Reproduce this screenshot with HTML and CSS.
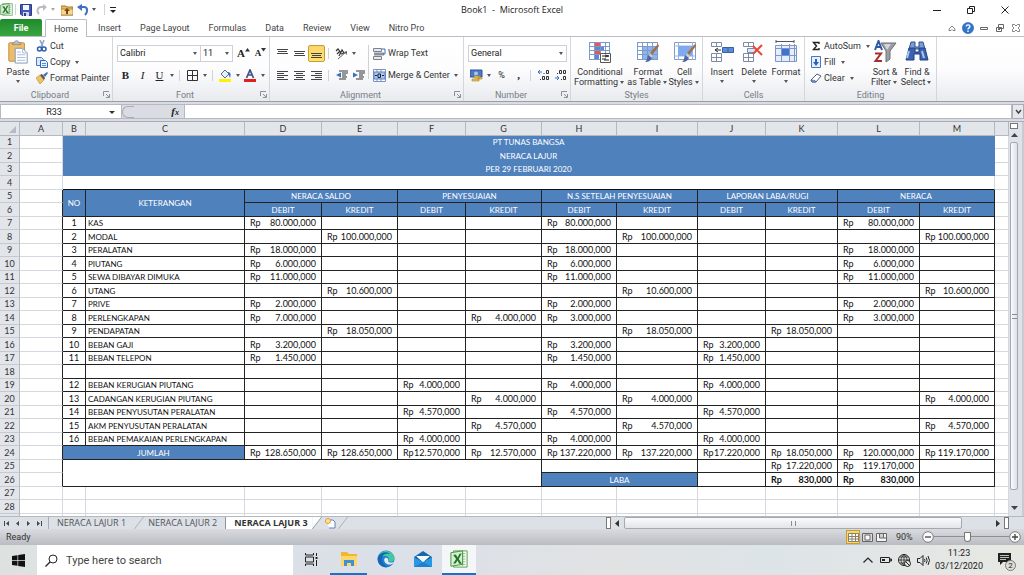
FILE: index.html
```html
<!DOCTYPE html>
<html lang="id">
<head>
<meta charset="utf-8">
<title>Book1 - Microsoft Excel</title>
<link rel="stylesheet" href="styles.css">
</head>
<body>
<svg class="defs" aria-hidden="true">
  <symbol id="excel" viewBox="0 0 20 20"><path d="M4 1h15v18H4z" fill="#f4faf2" stroke="#4f9a4b"/><path d="M11 4h6M11 7h6M11 10h6M11 13h6M11 16h6M14 3v15" stroke="#86bd7e"/><path d="M1 3l13-2v15L1 18z" fill="#d9efd2" stroke="#3c8c3b"/><path d="M3.500 5.500l3-.4 2 3.200 2-4 2.500-.3-3.200 6 3.500 5.500-3-.2-2-3.600-2 3.400-2.800-.2 3.300-5z" fill="#23772b"/></symbol>
  <symbol id="launch" viewBox="0 0 7 7"><path d="M.5 5V.5H6M3 3l3 3M6.500 3v3.500H3" fill="none" stroke="#8c9199"/></symbol>
</svg>

<header class="titlebar">
  <div class="quick">
    <svg class="i13"><use href="#excel"/></svg><span class="bar"></span>
    <button aria-label="Save"><svg class="i12" viewBox="0 0 12 12"><path d="M.5.5h11v11H2l-1.500-1.500z" fill="#4358b5" stroke="#2c3b8c"/><path d="M3 1h6v5H3z" fill="#f4f6ff"/><path d="M3 8h6v4H3z" fill="#cfd6ee"/><path d="M4 9h2v3H4z" fill="#2c3b8c"/></svg></button>
    <button class="split-button" aria-label="Redo"><svg class="i12" viewBox="0 0 12 12"><path d="M3 10C0 7 2 3 5 3h3" fill="none" stroke="#b9bcc2" stroke-width="2"/><path d="M7 0l4 3-4 4z" fill="#b9bcc2"/></svg><span class="dd pale"></span></button>
    <button aria-label="Open"><svg class="i12" viewBox="0 0 12 12"><path d="M0 2h5l1 1h6v8H0z" fill="#e8ba5a" stroke="#a57a2a"/><path d="M0 5h12v6H0z" fill="#f6d88e" stroke="#a57a2a" stroke-width=".7"/><path d="M6 4l3 3H7v3H5V7H3z" fill="#79421b"/></svg></button>
    <button class="split-button" aria-label="Undo"><svg class="i12" viewBox="0 0 12 12"><path d="M4 3h3c4 0 4 5 1 8" fill="none" stroke="#3d6fc6" stroke-width="2"/><path d="M5 0v7L0 3z" fill="#3d6fc6"/></svg><span class="dd"></span></button>
    <span class="bar"></span>
    <button aria-label="Customize"><svg class="i8" viewBox="0 0 8 8"><path d="M1 1.500h6" stroke="#222"/><path d="M1 4h6L4 7z" fill="#222"/></svg></button>
  </div>
  <h1>Book1&nbsp; -&nbsp; Microsoft Excel</h1>
  <div class="window">
    <button aria-label="Minimize"><svg class="i8" viewBox="0 0 8 8"><path d="M0 4.500h8" stroke="#222"/></svg></button>
    <button aria-label="Restore"><svg class="i8" viewBox="0 0 8 8"><path d="M.5 2.500h5v5h-5zM2.500 2V.5h5v5H6" fill="none" stroke="#222"/></svg></button>
    <button aria-label="Close"><svg class="i8" viewBox="0 0 8 8"><path d="M.5.5l7 7M7.500.5l-7 7" stroke="#222"/></svg></button>
  </div>
</header>

<nav class="tabs">
  <button class="file">File</button>
  <button class="home">Home</button>
  <button>Insert</button><button>Page Layout</button><button>Formulas</button><button>Data</button><button>Review</button><button>View</button><button>Nitro Pro</button>
  <div class="help">
    <button aria-label="Collapse ribbon"><svg class="i8" viewBox="0 0 8 8"><path d="M1 5l3-3 3 3v1.500H5L4 5.500 3 6.500H1z" fill="#fff" stroke="#666" stroke-width=".8"/></svg></button>
    <button aria-label="Help"><svg class="i12" viewBox="0 0 12 12"><circle cx="6" cy="6" r="5.600" fill="#2f75cd" stroke="#255ba6" stroke-width=".6"/><path d="M4.200 4.500c0-2.200 3.700-2.200 3.700 0C7.900 6 6 5.800 6 7.400M6 8.500V10" fill="none" stroke="#fff" stroke-width="1.400"/></svg></button>
    <button aria-label="Minimize workbook"><svg class="i8" viewBox="0 0 8 8"><path d="M.5 3.500h7v2h-7z" fill="#fff" stroke="#666"/></svg></button>
    <button aria-label="Restore workbook"><svg class="i8" viewBox="0 0 8 8"><path d="M2.500.5h5v4h-5zM.5 3.500h5v4h-5z" fill="#fff" stroke="#666"/><path d="M2 5.500h2" stroke="#666"/></svg></button>
    <button aria-label="Close workbook"><svg class="i8" viewBox="0 0 8 8"><path d="M.5.5h2L4 2 5.500.5h2v2L6 4l1.500 1.500v2h-2L4 6 2.500 7.500h-2v-2L2 4 .5 2.500z" fill="#fff" stroke="#666" stroke-width=".8"/></svg></button>
  </div>
</nav>

<div class="ribbon">
  <section class="group clipboard">
    <div class="tools">
      <button class="big paste"><svg class="i24" viewBox="0 0 24 26"><rect x="2" y="3" width="17" height="20" rx="1" fill="#edbd69" stroke="#c38d3a"/><path d="M6 5V3h2c0-3 5-3 5 0h2v2z" fill="#b9bcc3" stroke="#777" stroke-width=".6"/><path d="M9 9h8l5 5v11H9z" fill="#fff" stroke="#7f95bb"/><path d="M17 9v5h5M11 13h4M11 16h9M11 19h9M11 22h9" fill="none" stroke="#a6bbdc"/></svg><span>Paste</span><span class="dd"></span></button>
      <div class="list">
        <button><svg class="i12" viewBox="0 0 12 12"><path d="M4 0l3 7M8 0L5 7" stroke="#8aa3c8" stroke-width="1.500"/><circle cx="3.500" cy="9" r="2" fill="none" stroke="#2c5fae" stroke-width="1.500"/><circle cx="8" cy="9" r="2" fill="none" stroke="#2c5fae" stroke-width="1.500"/></svg>Cut</button>
        <button><svg class="i12" viewBox="0 0 12 12"><path d="M.5 1.500h5l2 2v6h-7z" fill="#dbe8fb" stroke="#4a78c0"/><path d="M4.500 4.500h5l2 2v5h-7z" fill="#e8f1ff" stroke="#3366b4"/><path d="M6 7.500h4M6 9.500h4" stroke="#5f8bd0"/></svg>Copy<span class="dd"></span></button>
        <button><svg class="i12" viewBox="0 0 12 12"><path d="M0 6l4-3 4 5-4 4z" fill="#eec45f" stroke="#b48a2c" stroke-width=".6"/><path d="M4 3l2-1 3 4-1 2z" fill="#555"/><path d="M7 3l4-3 1 1-3 4z" fill="#4b6fb0"/></svg>Format Painter</button>
      </div>
    </div>
    <footer><h2>Clipboard</h2><button aria-label="Clipboard options"><svg class="i7"><use href="#launch"/></svg></button></footer>
  </section>

  <section class="group font">
    <div class="rows">
      <div class="row">
        <label class="combo face"><select aria-label="Font"><option>Calibri</option></select></label><label class="combo size"><select aria-label="Font size"><option>11</option></select></label>
        <button class="t serif grow" aria-label="Grow font">A<svg class="i5" viewBox="0 0 5 5"><path d="M0 3.500L2.500 0 5 3.500z" fill="#333"/></svg></button><button class="t serif shrink" aria-label="Shrink font">A<svg class="i5" viewBox="0 0 5 5"><path d="M0 0h5L2.500 3.500z" fill="#333"/></svg></button>
      </div>
      <div class="row">
        <button class="t serif"><b>B</b></button><button class="t serif"><i>I</i></button><button class="t serif"><u>U</u></button><span class="dd"></span><span class="bar"></span>
        <button class="t" aria-label="Borders"><svg class="i11" viewBox="0 0 11 11"><path d="M.5.5h10v10H.5zM5.500 0v11M0 5.500h11" fill="none" stroke="#333"/></svg></button><span class="dd"></span><span class="bar"></span>
        <button class="t" aria-label="Fill color"><svg class="i13" viewBox="0 0 13 13"><path d="M2 5l4-4 4 4-4 4z" fill="#e9eef8" stroke="#55698f"/><path d="M9 3c3 0 3 3 2 6-1-3-2-3-2-6z" fill="#3b6fc0"/><path d="M0 10h12v3H0z" fill="#fdf200"/></svg></button><span class="dd"></span>
        <button class="t" aria-label="Font color"><svg class="i13" viewBox="0 0 13 13"><path d="M2.500 9L6 1l3.500 8M4 6h4.500" fill="none" stroke="#3b5488" stroke-width="1.700"/><path d="M0 10h12v3H0z" fill="#e01f1f"/></svg></button><span class="dd"></span>
      </div>
    </div>
    <footer><h2>Font</h2><button aria-label="Font options"><svg class="i7"><use href="#launch"/></svg></button></footer>
  </section>

  <section class="group align">
    <div class="tools">
      <div class="rows">
        <div class="row">
          <button class="t" aria-label="Top align"><svg class="i11" viewBox="0 0 11 11"><path d="M0 1.500h11M1 3.500h9M0 5.500h11" stroke="#444"/></svg></button><button class="t" aria-label="Middle align"><svg class="i11" viewBox="0 0 11 11"><path d="M0 3.500h11M1 5.500h9M0 7.500h11" stroke="#444"/></svg></button><button class="t on" aria-label="Bottom align"><svg class="i11" viewBox="0 0 11 11"><path d="M0 5.500h11M1 7.500h9M0 9.500h11" stroke="#444"/></svg></button><span class="bar"></span>
          <button class="t" aria-label="Orientation"><svg class="i13" viewBox="0 0 13 13"><path d="M1 4l2-2 3 4M2 7l3-3M4 9l3-6 2 3-3 1" fill="none" stroke="#333" stroke-width="1.200"/><path d="M3 12l8-7" stroke="#666"/><path d="M12 4v4L9 5z" fill="#666"/></svg></button><span class="dd"></span>
        </div>
        <div class="row">
          <button class="t" aria-label="Align left"><svg class="i11" viewBox="0 0 11 11"><path d="M0 1.500h11M0 3.500h7M0 5.500h11M0 7.500h7M0 9.500h11" stroke="#444"/></svg></button><button class="t" aria-label="Center"><svg class="i11" viewBox="0 0 11 11"><path d="M0 1.500h11M2 3.500h7M0 5.500h11M2 7.500h7M0 9.500h11" stroke="#444"/></svg></button><button class="t" aria-label="Align right"><svg class="i11" viewBox="0 0 11 11"><path d="M0 1.500h11M4 3.500h7M0 5.500h11M4 7.500h7M0 9.500h11" stroke="#444"/></svg></button><span class="bar"></span>
          <button class="t" aria-label="Decrease indent"><svg class="i12" viewBox="0 0 12 11"><path d="M3 1.500h9M6 3.500h6M6 5.500h4M6 7.500h5M3 9.500h7" stroke="#333"/><path d="M5 3v5L0 5.500z" fill="#3b6fc0"/></svg></button><button class="t" aria-label="Increase indent"><svg class="i12" viewBox="0 0 12 11"><path d="M3 1.500h9M6 3.500h6M6 5.500h4M6 7.500h5M3 9.500h7" stroke="#333"/><path d="M0 3v5l5-2.500z" fill="#3b6fc0"/></svg></button>
        </div>
      </div>
      <span class="bar tall"></span>
      <div class="rows wrap">
        <div class="row"><button><svg class="i13" viewBox="0 0 13 13"><path d="M.5 1.500h8v3h-8zM.5 9.500h8v3h-8z" fill="#e7e9ee" stroke="#7b828e"/><path d="M1 5.500h10v3H1z" fill="#8c939e"/><path d="M9 2h3v5h-2" fill="none" stroke="#3b6fc0"/></svg>Wrap Text</button></div>
        <div class="row"><button><svg class="i13" viewBox="0 0 13 13"><path d="M.5.5h12v12H.5zM4 0v3M8 0v3M4 10v3M8 10v3" fill="#fff" stroke="#7993c2"/><path d="M1 3h11v7H1z" fill="#a9c5f3" stroke="#5c80bf"/><path d="M2 6.500h2M9 6.500h2M5 5h2.500v3.500H5z" fill="none" stroke="#222"/></svg>Merge &amp; Center<span class="dd"></span></button></div>
      </div>
    </div>
    <footer><h2>Alignment</h2><button aria-label="Alignment options"><svg class="i7"><use href="#launch"/></svg></button></footer>
  </section>

  <section class="group number">
    <div class="rows">
      <div class="row"><label class="combo"><select aria-label="Number format"><option>General</option></select></label></div>
      <div class="row">
        <button class="t" aria-label="Accounting format"><svg class="i13" viewBox="0 0 13 13"><path d="M0 1h12v7H0z" fill="#4c78c4" stroke="#2f559a"/><circle cx="6" cy="4.500" r="2" fill="#a9c5f3"/><path d="M4 7h6v2H4zM2 10h7v2H2zM8 8h4v2H8z" fill="#efc254" stroke="#a9812a" stroke-width=".6"/></svg></button><span class="dd"></span>
        <button class="t pct">%</button><button class="t serif"><b>,</b></button><span class="bar"></span>
        <button class="t" aria-label="Increase decimal"><svg class="i12" viewBox="0 0 12 12"><path d="M0 3h4M2 1L0 3l2 2" fill="none" stroke="#3b6fc0"/><path d="M8.500 1.500h2v3h-2zM4.500 7.500h2v3h-2zM8.500 7.500h2v3h-2z" fill="none" stroke="#333"/><path d="M5.500 4h1v1h-1zM2 10h1v1H2z" fill="#333"/></svg></button><button class="t" aria-label="Decrease decimal"><svg class="i12" viewBox="0 0 12 12"><path d="M0 9h4M2 7l2 2-2 2" fill="none" stroke="#3b6fc0"/><path d="M4.500 1.500h2v3h-2zM8.500 1.500h2v3h-2zM8.500 7.500h2v3h-2z" fill="none" stroke="#333"/><path d="M2 4h1v1H2zM6 10h1v1H6z" fill="#333"/></svg></button>
      </div>
    </div>
    <footer><h2>Number</h2><button aria-label="Number options"><svg class="i7"><use href="#launch"/></svg></button></footer>
  </section>

  <section class="group styles">
    <div class="tools">
      <button class="big"><svg class="i24" viewBox="0 0 24 24"><path d="M1 2h21v18H1z" fill="#fff"/><path d="M6 2h6v4H6zM6 10h6v4H6z" fill="#ef5350"/><path d="M6 6h10v4H6zM6 14h5v6H6z" fill="#5b87d6"/><path d="M1 2.500h21M1 6.500h21M1 10.500h21M1 14.500h21M1 19.500h21M1.500 2v18M6.500 2v18M12.500 2v18M17.500 2v18M21.500 2v18" stroke="#7f99c8" fill="none"/><path d="M12.500 13.500h10v9h-10z" fill="#fff" stroke="#555"/><path d="M14 16h4M14 19h4M17 15l4 1-4 1M16 20h5" stroke="#222" fill="none"/></svg><span>Conditional</span><span>Formatting<span class="dd"></span></span></button>
      <button class="big"><svg class="i24" viewBox="0 0 24 24"><path d="M1 2h21v18H1z" fill="#fff"/><path d="M6 6h16v14H6z" fill="#8eb4ef"/><path d="M1 2.500h21M1 6.500h21M1 10.500h21M1 14.500h21M1 19.500h21M1.500 2v18M6.500 2v18M11.500 2v18M16.500 2v18M21.500 2v18" stroke="#7f99c8" fill="none"/><path d="M22 4l1 2-7 9-2-2z" fill="#a46d42"/><path d="M14 13l3 3-1 2-3-2z" fill="#ccc"/><path d="M12 15l4 3c-2 4-5 4-7 4 2-1 2-4 3-7z" fill="#4c67a6"/></svg><span>Format</span><span>as Table<span class="dd"></span></span></button>
      <button class="big"><svg class="i24" viewBox="0 0 24 24"><path d="M1.500 2.500h21v17h-21z" fill="#fff" stroke="#7f99c8"/><path d="M1 6h21M1 16h21M5.500 2v18M19.500 2v18" stroke="#9fb3d8"/><path d="M5 6h14v10H5z" fill="#7faaf0"/><path d="M22 4l1 2-7 9-2-2z" fill="#a46d42"/><path d="M14 13l3 3-1 2-3-2z" fill="#ccc"/><path d="M12 15l4 3c-2 4-5 4-7 4 2-1 2-4 3-7z" fill="#4c67a6"/></svg><span>Cell</span><span>Styles<span class="dd"></span></span></button>
    </div>
    <footer><h2>Styles</h2></footer>
  </section>

  <section class="group cells">
    <div class="tools">
      <button class="big"><svg class="i24" viewBox="0 0 24 24"><path d="M1.500 2.500h10v4h-10zM6.500 2v4M1.500 13.500h10v8h-10zM1 17.500h10M6.500 13v8" fill="#fff" stroke="#7d8ba6"/><path d="M12.500 7.500h11v5h-11z" fill="#5d8ade" stroke="#39609f"/><path d="M18 8v5" stroke="#39609f"/><path d="M5 10h6M8 8l-3 2 3 2" fill="none" stroke="#333"/></svg><span>Insert</span><span class="dd"></span></button>
      <button class="big"><svg class="i24" viewBox="0 0 24 24"><path d="M1.500 2.500h10v4h-10zM6.500 2v4M1.500 13.500h10v8h-10zM1 17.500h10M6.500 13v8" fill="#fff" stroke="#7d8ba6"/><path d="M5.500 8.500h8v4h-8z" fill="#dce5f5" stroke="#7d8ba6"/><path d="M11 6l9 9M20 5l-9 9" stroke="#e8473c" stroke-width="2"/></svg><span>Delete</span><span class="dd"></span></button>
      <button class="big"><svg class="i24" viewBox="0 0 24 24"><path d="M2 1.500h18M2 0v3M20 0v3" stroke="#555"/><path d="M1.500 5.500h21v16h-21z" fill="#e6eefc" stroke="#7d97c8"/><path d="M7.500 4v18M15.500 4v18M20.500 4v18M1 8.500h21M1 15.500h21" stroke="#7d97c8"/><path d="M8 9h7v6H8z" fill="#3f73d1"/></svg><span>Format</span><span class="dd"></span></button>
    </div>
    <footer><h2>Cells</h2></footer>
  </section>

  <section class="group editing">
    <div class="tools">
      <div class="list">
        <button><svg class="i12" viewBox="0 0 12 12"><path d="M9 4V2.500H3.500L6.500 6l-3 3.500H9V8" fill="none" stroke="#222" stroke-width="1.400"/></svg>AutoSum<span class="dd"></span></button>
        <button><svg class="i12" viewBox="0 0 12 12"><path d="M1.500.5h9v11h-9z" fill="#e6effd" stroke="#4a78c0"/><path d="M5 3h2v3h2l-3 4-3-4h2z" fill="#2c62b8"/></svg>Fill<span class="dd"></span></button>
        <button><svg class="i12" viewBox="0 0 12 12"><path d="M1 8l6-6 4 2-5 6H2z" fill="#fff" stroke="#4d5f8a"/><path d="M1 8l4 .5L6 10H2z" fill="#8aa7dd" stroke="#4d5f8a" stroke-width=".7"/></svg>Clear<span class="dd"></span></button>
      </div>
      <button class="big"><svg class="i24" viewBox="0 0 24 24"><path d="M2 10L5.500 1 9 10M3.500 7h4.500" fill="none" stroke="#2e57a8" stroke-width="2"/><path d="M2 13.500h6L2.500 21H9" fill="none" stroke="#a52f2f" stroke-width="2"/><path d="M8 3h15l-6 8v8l-4 3V11z" fill="#9a9da3" stroke="#6c7077"/><path d="M11 4h7l-4 6z" fill="#d3d5d9"/></svg><span>Sort &amp;</span><span>Filter<span class="dd"></span></span></button>
      <button class="big"><svg class="i24" viewBox="0 0 24 24"><path d="M6 2h4v5h4V2h4l2 7H4z" fill="#7b9cd6" stroke="#2f4f8f"/><path d="M4 8h6v4h4V8h6l3 12h-8v-6H9v6H1z" fill="#3b63b2" stroke="#25417e"/><path d="M4 11l-2 7M17 11l2 7" stroke="#a9c5f3" stroke-width="2"/></svg><span>Find &amp;</span><span>Select<span class="dd"></span></span></button>
    </div>
    <footer><h2>Editing</h2></footer>
  </section>
</div>

<div class="formula">
  <label class="name"><input aria-label="Name box" value="R33"></label>
  <div class="fx"><span class="knob"></span><i>f<small>x</small></i></div>
  <input class="entry" aria-label="Formula bar">
  <button class="expand" aria-label="Expand formula bar"><svg class="i7" viewBox="0 0 7 7"><path d="M1 2l2.500 3L6 2" fill="none" stroke="#444" stroke-width="1.500"/></svg></button>
</div>

<main class="workbook">
<div class="sheet">
<table>
<colgroup><col class="c-row"><col class="c-a"><col class="c-b"><col class="c-c"><col class="c-d"><col class="c-e"><col class="c-f"><col class="c-g"><col class="c-h"><col class="c-i"><col class="c-j"><col class="c-k"><col class="c-l"><col class="c-m"><col></colgroup>
<thead><tr><th class="corner"><svg class="i7" viewBox="0 0 7 7"><path d="M7 0v7H0z" fill="#b6bac2"/></svg><th>A<th>B<th>C<th>D<th>E<th>F<th>G<th>H<th>I<th>J<th>K<th>L<th>M<th></thead>
<tbody class="heading">
<tr><th>1<td><td colspan="12" class="blue">PT TUNAS BANGSA<td>
<tr><th>2<td><td colspan="12" class="blue">NERACA LAJUR<td>
<tr><th>3<td><td colspan="12" class="blue">PER 29 FEBRUARI 2020<td>
<tr><th>4<td><td colspan="12" class="top"><td>
</tbody>
<tbody class="ledger">
<tr><th>5<td class="a"><td rowspan="2" class="blue">NO<td rowspan="2" class="blue">KETERANGAN<td colspan="2" class="blue">NERACA SALDO<td colspan="2" class="blue">PENYESUAIAN<td colspan="2" class="blue">N.S SETELAH PENYESUAIAN<td colspan="2" class="blue">LAPORAN LABA/RUGI<td colspan="2" class="blue">NERACA<td class="n">
<tr><th>6<td class="a"><td class="blue">DEBIT<td class="blue">KREDIT<td class="blue">DEBIT<td class="blue">KREDIT<td class="blue">DEBIT<td class="blue">KREDIT<td class="blue">DEBIT<td class="blue">KREDIT<td class="blue">DEBIT<td class="blue">KREDIT<td class="n">
<tr><th>7<td class="a"><td class="no">1<td>KAS<td><span class="m"><span>Rp</span>80.000,000</span><td><td><td><td><span class="m"><span>Rp</span>80.000,000</span><td><td><td><td><span class="m"><span>Rp</span>80.000,000</span><td><td class="n">
<tr><th>8<td class="a"><td class="no">2<td>MODAL<td><td><span class="m"><span>Rp</span>100.000,000</span><td><td><td><td><span class="m"><span>Rp</span>100.000,000</span><td><td><td><td><span class="m"><span>Rp</span>100.000,000</span><td class="n">
<tr><th>9<td class="a"><td class="no">3<td>PERALATAN<td><span class="m"><span>Rp</span>18.000,000</span><td><td><td><td><span class="m"><span>Rp</span>18.000,000</span><td><td><td><td><span class="m"><span>Rp</span>18.000,000</span><td><td class="n">
<tr><th>10<td class="a"><td class="no">4<td>PIUTANG<td><span class="m"><span>Rp</span>6.000,000</span><td><td><td><td><span class="m"><span>Rp</span>6.000,000</span><td><td><td><td><span class="m"><span>Rp</span>6.000,000</span><td><td class="n">
<tr><th>11<td class="a"><td class="no">5<td>SEWA DIBAYAR DIMUKA<td><span class="m"><span>Rp</span>11.000,000</span><td><td><td><td><span class="m"><span>Rp</span>11.000,000</span><td><td><td><td><span class="m"><span>Rp</span>11.000,000</span><td><td class="n">
<tr><th>12<td class="a"><td class="no">6<td>UTANG<td><td><span class="m"><span>Rp</span>10.600,000</span><td><td><td><td><span class="m"><span>Rp</span>10.600,000</span><td><td><td><td><span class="m"><span>Rp</span>10.600,000</span><td class="n">
<tr><th>13<td class="a"><td class="no">7<td>PRIVE<td><span class="m"><span>Rp</span>2.000,000</span><td><td><td><td><span class="m"><span>Rp</span>2.000,000</span><td><td><td><td><span class="m"><span>Rp</span>2.000,000</span><td><td class="n">
<tr><th>14<td class="a"><td class="no">8<td>PERLENGKAPAN<td><span class="m"><span>Rp</span>7.000,000</span><td><td><td><span class="m"><span>Rp</span>4.000,000</span><td><span class="m"><span>Rp</span>3.000,000</span><td><td><td><td><span class="m"><span>Rp</span>3.000,000</span><td><td class="n">
<tr><th>15<td class="a"><td class="no">9<td>PENDAPATAN<td><td><span class="m"><span>Rp</span>18.050,000</span><td><td><td><td><span class="m"><span>Rp</span>18.050,000</span><td><td><span class="m"><span>Rp</span>18.050,000</span><td><td><td class="n">
<tr><th>16<td class="a"><td class="no">10<td>BEBAN GAJI<td><span class="m"><span>Rp</span>3.200,000</span><td><td><td><td><span class="m"><span>Rp</span>3.200,000</span><td><td><span class="m"><span>Rp</span>3.200,000</span><td><td><td><td class="n">
<tr><th>17<td class="a"><td class="no">11<td>BEBAN TELEPON<td><span class="m"><span>Rp</span>1.450,000</span><td><td><td><td><span class="m"><span>Rp</span>1.450,000</span><td><td><span class="m"><span>Rp</span>1.450,000</span><td><td><td><td class="n">
<tr><th>18<td class="a"><td><td><td><td><td><td><td><td><td><td><td><td><td class="n">
<tr><th>19<td class="a"><td class="no">12<td>BEBAN KERUGIAN PIUTANG<td><td><td><span class="m"><span>Rp</span>4.000,000</span><td><td><span class="m"><span>Rp</span>4.000,000</span><td><td><span class="m"><span>Rp</span>4.000,000</span><td><td><td><td class="n">
<tr><th>20<td class="a"><td class="no">13<td>CADANGAN KERUGIAN PIUTANG<td><td><td><td><span class="m"><span>Rp</span>4.000,000</span><td><td><span class="m"><span>Rp</span>4.000,000</span><td><td><td><td><span class="m"><span>Rp</span>4.000,000</span><td class="n">
<tr><th>21<td class="a"><td class="no">14<td>BEBAN PENYUSUTAN PERALATAN<td><td><td><span class="m"><span>Rp</span>4.570,000</span><td><td><span class="m"><span>Rp</span>4.570,000</span><td><td><span class="m"><span>Rp</span>4.570,000</span><td><td><td><td class="n">
<tr><th>22<td class="a"><td class="no">15<td>AKM PENYUSUTAN PERALATAN<td><td><td><td><span class="m"><span>Rp</span>4.570,000</span><td><td><span class="m"><span>Rp</span>4.570,000</span><td><td><td><td><span class="m"><span>Rp</span>4.570,000</span><td class="n">
<tr><th>23<td class="a"><td class="no">16<td>BEBAN PEMAKAIAN PERLENGKAPAN<td><td><td><span class="m"><span>Rp</span>4.000,000</span><td><td><span class="m"><span>Rp</span>4.000,000</span><td><td><span class="m"><span>Rp</span>4.000,000</span><td><td><td><td class="n">
<tr><th>24<td class="a"><td colspan="2" class="blue">JUMLAH<td><span class="m"><span>Rp</span>128.650,000</span><td><span class="m"><span>Rp</span>128.650,000</span><td><span class="m"><span>Rp</span>12.570,000</span><td><span class="m"><span>Rp</span>12.570,000</span><td><span class="m"><span>Rp</span>137.220,000</span><td><span class="m"><span>Rp</span>137.220,000</span><td><span class="m"><span>Rp</span>17.220,000</span><td><span class="m"><span>Rp</span>18.050,000</span><td><span class="m"><span>Rp</span>120.000,000</span><td><span class="m"><span>Rp</span>119.170,000</span><td class="n">
<tr><th>25<td class="a"><td colspan="6" rowspan="2"><td colspan="2"><td><td><span class="m"><span>Rp</span>17.220,000</span><td><span class="m"><span>Rp</span>119.170,000</span><td><td class="n">
<tr><th>26<td class="a"><td colspan="2" class="blue">LABA<td><td><b class="m"><span>Rp</span>830,000</b><td><b class="m"><span>Rp</span>830,000</b><td><td class="n">
</tbody>
<tbody>
<tr><th>27<td><td><td><td><td><td><td><td><td><td><td><td><td><td>
<tr><th>28<td><td><td><td><td><td><td><td><td><td><td><td><td><td>
<tr><th><td><td><td><td><td><td><td><td><td><td><td><td><td><td>
</tbody>
</table>
</div>
<div class="vscroll">
  <span class="split"></span>
  <button aria-label="Scroll up"><svg class="i7" viewBox="0 0 7 7"><path d="M0 5l3.500-4L7 5z" fill="#444"/></svg></button>
  <span class="thumb"><span class="grip"></span></span>
  <button aria-label="Scroll down"><svg class="i7" viewBox="0 0 7 7"><path d="M0 2l3.500 4L7 2z" fill="#444"/></svg></button>
</div>
</main>

<nav class="sheets">
  <div class="arrows">
    <button aria-label="First sheet"><svg class="i7" viewBox="0 0 7 7"><path d="M1.500 1v5" stroke="#444"/><path d="M6 1v5L3 3.500z" fill="#444"/></svg></button>
    <button aria-label="Previous sheet"><svg class="i7" viewBox="0 0 7 7"><path d="M5 1v5L2 3.500z" fill="#444"/></svg></button>
    <button aria-label="Next sheet"><svg class="i7" viewBox="0 0 7 7"><path d="M2 1v5l3-2.500z" fill="#444"/></svg></button>
    <button aria-label="Last sheet"><svg class="i7" viewBox="0 0 7 7"><path d="M5.500 1v5" stroke="#444"/><path d="M1 1v5l3-2.500z" fill="#444"/></svg></button>
  </div>
  <button class="tab">NERACA LAJUR 1</button><svg class="slant" viewBox="0 0 10 13"><path d="M0 13L10 0" stroke="#a9adb5"/></svg>
  <button class="tab">NERACA LAJUR 2</button>
  <button class="tab active">NERACA LAJUR 3</button><svg class="slant" viewBox="0 0 10 13"><path d="M0 0h10L0 13z" fill="#fff"/><path d="M0 13L10 0" stroke="#8f949c"/></svg>
  <button class="new" aria-label="Insert sheet"><svg class="i12" viewBox="0 0 12 12"><path d="M3 3h6l2 2v6H5" fill="#fff" stroke="#6282bd"/><circle cx="4" cy="4" r="2.500" fill="#fbe39a" stroke="#e0a030"/></svg></button><svg class="slant" viewBox="0 0 10 13"><path d="M0 13L10 0" stroke="#a9adb5"/></svg>
  <div class="hscroll">
    <span class="split"></span>
    <button aria-label="Scroll left"><svg class="i7" viewBox="0 0 7 7"><path d="M5 0v7L1 3.500z" fill="#333"/></svg></button>
    <span class="track"><span class="thumb"><span class="grip"></span></span></span>
    <button aria-label="Scroll right"><svg class="i7" viewBox="0 0 7 7"><path d="M2 0v7l4-3.500z" fill="#333"/></svg></button>
    <span class="split"></span>
  </div>
</nav>

<footer class="status">
  <span class="ready">Ready</span>
  <div class="views">
    <button class="on" aria-label="Normal view"><svg class="i11" viewBox="0 0 11 11"><path d="M.5 1.500h10v8H.5zM0 4.500h11M0 7h11M4 1v9M7.500 1v9" fill="#fff" stroke="#86806a"/></svg></button>
    <button aria-label="Page layout view"><svg class="i11" viewBox="0 0 11 11"><path d="M.5 1.500h10v8H.5z" fill="#ddd" stroke="#666"/><path d="M3 3h5v5H3z" fill="#fff" stroke="#666"/></svg></button>
    <button aria-label="Page break view"><svg class="i11" viewBox="0 0 11 11"><path d="M.5 1.500h10v8H.5zM3.500 1v5h4V1M7.500 6h3" fill="#f4f4f4" stroke="#666"/></svg></button>
  </div>
  <span class="zoom">90%</span>
  <button aria-label="Zoom out"><svg class="i12" viewBox="0 0 12 12"><circle cx="6" cy="6" r="5.300" fill="#fafafa" stroke="#7b7f87"/><path d="M3 6h6" stroke="#444" stroke-width="1.300"/></svg></button>
  <input type="range" aria-label="Zoom" min="10" max="190" value="90">
  <button aria-label="Zoom in"><svg class="i12" viewBox="0 0 12 12"><circle cx="6" cy="6" r="5.300" fill="#fafafa" stroke="#7b7f87"/><path d="M3 6h6M6 3v6" stroke="#444" stroke-width="1.300"/></svg></button>
</footer>

<div class="taskbar">
  <button class="start" aria-label="Start"><svg class="i13" viewBox="0 0 13 13"><path d="M0 2l5.500-.8V6H0zM6.200 1.100L13 0v6H6.200zM0 6.800h5.500v5L0 11zM6.200 6.800H13V13l-6.800-1z" fill="#111"/></svg></button>
  <label class="search"><svg class="i13" viewBox="0 0 13 13"><circle cx="8" cy="5" r="4" fill="none" stroke="#222"/><path d="M5 8l-4.500 4.500" stroke="#222" stroke-width="1.200"/></svg><input type="text" placeholder="Type here to search" aria-label="Search"></label>
  <button class="app" aria-label="Task view"><svg class="i13" viewBox="0 0 13 13"><path d="M.5 4h8v5h-8zM.5 0v2h8V0M.5 13v-2h8v2" fill="none" stroke="#222"/><path d="M11.500 0v3M11.500 7v6" stroke="#222"/><path d="M10.500 4h2v2h-2z" fill="#222"/></svg></button>
  <button class="app running" aria-label="File Explorer"><svg class="i18" viewBox="0 0 18 18"><path d="M1 2h6l2 2h8v12H1z" fill="#f2b62f"/><path d="M1 6h16v10H1z" fill="#fdd769"/><path d="M4 16v-6h10v6h-3v-3H7v3z" fill="#3d8fd6"/></svg></button>
  <button class="app" aria-label="Edge"><svg class="i18" viewBox="0 0 18 18"><circle cx="9" cy="9" r="8.500" fill="#1f7fd0"/><path d="M1 7C3-1 16-1 17.500 8c.4 4-5 4.500-6.500 3 2-3 0-5-3-5-3 0-6 1-7 4z" fill="#43c6a2"/><path d="M1 7c2-5 9-6 12-3-4-1-8 0-8 5 0 4 3 7 6 8C4 18-.5 13 1 7z" fill="#1666b8"/><path d="M8 8c2-1 4 1 3 3 1 2 5 2 6.500 0-1 3-4 4-6 3.500C8 14 6 10 8 8z" fill="#e6eaf0"/></svg></button>
  <button class="app" aria-label="Mail"><svg class="i18" viewBox="0 0 18 18"><path d="M0 7l9-6 9 6v10H0z" fill="#1667ad"/><path d="M2 6h14v6H2z" fill="#0f4f8c"/><path d="M2 6h14l-7 6z" fill="#f5f8fc"/><path d="M0 7l9 5 9-5v10H0z" fill="#2998e4"/><path d="M3 7h12l-6 5z" fill="#f5f8fc"/><path d="M0 17l9-5 9 5z" fill="#1c7fd0"/></svg></button>
  <button class="app running current" aria-label="Excel"><svg class="i18"><use href="#excel"/></svg></button>
  <div class="tray">
    <svg class="i12" viewBox="0 0 12 12"><path d="M1.500 8.500L6 4l4.500 4.500" fill="none" stroke="#222" stroke-width="1.200"/></svg>
    <svg class="i12" viewBox="0 0 12 12"><path d="M.5 3.500h9v5h-9zM10 5h1.500v2H10z" fill="none" stroke="#222"/><path d="M2 5h3v2H2z" fill="#222"/></svg>
    <svg class="i13" viewBox="0 0 13 13"><circle cx="6" cy="6" r="5.500" fill="none" stroke="#222"/><path d="M.5 6h11M6 .5v11M2 3h8M2 9h6M6 .5C2 4 2 8 6 11.500M6 .5c4 3.500 4 7.500 0 11" fill="none" stroke="#222" stroke-width=".8"/><circle cx="9.500" cy="9.500" r="3" fill="#e5e7e3" stroke="#222"/><path d="M7.500 7.500l4 4" stroke="#222"/></svg>
    <svg class="i13" viewBox="0 0 13 13"><path d="M.5 4.500H3l3-3v10l-3-3H.5z" fill="none" stroke="#222"/><path d="M7.500 5q1 1.500 0 3M9.200 3.500q2 3 0 6M11 2q3 4.500 0 9" fill="none" stroke="#222"/></svg>
  </div>
  <time><span>11:23</span><span>03/12/2020</span></time>
  <button class="notes" aria-label="Notifications"><svg class="i18" viewBox="0 0 18 18"><path d="M1 2h13v9H6l-3 3v-3H1z" fill="#222"/><path d="M3 4.500h9M3 6.500h9M3 8.500h6" stroke="#e5e7e3" stroke-width=".8"/></svg><span class="badge">2</span></button>
</div>
</body>
</html>
```
FILE: styles.css
```css
* { box-sizing: border-box; }
body {
  margin: 0;
  height: 100vh;
  display: flex;
  flex-direction: column;
  overflow: hidden;
  background: #fff;
  color: #333;
  font: 9px/10px Roboto, "Noto Sans", sans-serif;
}
button { border: 0; padding: 0; margin: 0; background: none; color: inherit; font: inherit; display: flex; align-items: center; justify-content: center; white-space: nowrap; }
input, select { font: inherit; color: inherit; border: 0; padding: 0; margin: 0; min-width: 0; border-radius: 0; }
h1, h2 { margin: 0; font: inherit; }
svg { display: block; flex: none; }
.defs { position: absolute; width: 0; height: 0; }
.i5 { width: 5px; height: 5px; }
.i7 { width: 7px; height: 7px; }
.i8 { width: 8px; height: 8px; }
.i11 { width: 11px; height: 11px; }
.i12 { width: 12px; height: 12px; }
.i13 { width: 13px; height: 13px; }
.i18 { width: 18px; height: 18px; }
.i24 { width: 24px; height: 24px; }
.dd { flex: none; width: 8px; height: 3px; display: inline-flex; justify-content: center; }
.dd::after { content: ""; border: 2px solid transparent; border-top: 3px solid #555; border-bottom: 0; }
.dd.pale::after { border-top-color: #aaa; }
.bar { flex: none; width: 1px; height: 11px; background: #cfd2d8; margin: 0 4px 0 3px; }

/* Title bar */
.titlebar { flex: none; height: 19px; display: grid; grid-template-columns: 1fr auto 1fr; align-items: center; }
.titlebar h1 { color: #222; font-family: "Open Sans", sans-serif; }
.quick { display: flex; align-items: center; }
.quick button { margin-right: 4px; }
.split-button { gap: 1px; }
.quick .bar { margin-left: 2px; }
.window { display: flex; justify-content: flex-end; padding-right: 2px; }
.window button { width: 34px; height: 19px; }

/* Ribbon tabs */
.tabs { flex: none; height: 18px; display: flex; align-items: stretch; gap: 19px; border-bottom: 1px solid #b9bdc4; color: #444; }
.tabs .file { width: 42px; margin-right: -16px; background: linear-gradient(#1f8a2c, #3aa63f); border-radius: 2px 2px 0 0; color: #fff; font-weight: bold; }
.tabs .home { width: 42px; margin: 0 -8px -1px 0; border: 1px solid #b9bdc4; border-bottom: 0; border-radius: 2px 2px 0 0; background: #fff; }
.help { margin-left: auto; display: flex; align-items: center; gap: 8px; padding-right: 4px; }
.help button { width: 8px; }

/* Ribbon */
.ribbon { flex: none; height: 65px; display: flex; background: linear-gradient(#fff, #fdfdfe 50%, #e8eaee); border-bottom: 1px solid #999ea7; }
.group { display: flex; flex-direction: column; border-right: 1px solid #d3d6db; }
.group footer { height: 13px; display: flex; align-items: center; color: #777c85; }
.group h2 { flex: 1; text-align: center; }
.group footer button { width: 12px; }
.clipboard { width: 113px; }
.font { width: 157px; }
.align { width: 194px; }
.number { width: 107px; }
.styles { width: 132px; }
.cells { width: 102px; }
.editing { width: 132px; }
.tools { flex: 1; display: flex; }
.rows { flex: 1; display: flex; flex-direction: column; gap: 4px; padding: 7px 0 0 4px; }
.align .tools > .rows { flex: none; }
.row { display: flex; align-items: center; height: 18px; }
.wrap.rows { padding-left: 0; }
.wrap button, .list button { gap: 2px; }
.bar.tall { height: 34px; margin-top: 8px; margin-left: 1px; }
.t { width: 17px; height: 17px; flex: none; }
.t.on { background: linear-gradient(#fbd668, #fde36f); border: 1px solid #c69b3c; border-radius: 2px; }
.serif { font: 11px/12px "Liberation Serif", serif; color: #222; }
.grow { font-weight: bold; margin-left: 2px; }
.shrink { font-size: 9px; font-weight: bold; }
.grow svg, .shrink svg { align-self: flex-start; margin-top: 3px; }
.pct { color: #222; }
.list { display: flex; flex-direction: column; align-items: flex-start; padding-top: 1px; }
.list button { height: 16px; }
.list .dd { margin-left: 1px; }
.big { flex-direction: column; justify-content: flex-start; padding-top: 3px; }
.big > span { height: 10px; display: flex; align-items: center; }
.big svg { margin-bottom: 3px; }
.big > .dd { height: 8px; }
.paste { width: 36px; }
.styles .big:nth-child(1) { width: 58px; }
.styles .big:nth-child(2) { width: 38px; }
.styles .big:nth-child(3) { width: 35px; }
.cells .tools { padding-left: 3px; }
.cells .big { width: 32px; }
.editing .list { width: 64px; padding-left: 5px; }
.editing .big { width: 32px; }
.combo { position: relative; display: flex; height: 17px; border: 1px solid #cdd0d6; background: #fff; }
.combo select { flex: 1; appearance: none; background: none; padding-left: 2px; color: #222; }
.combo::after { content: ""; position: absolute; right: 3px; top: 6px; border: 2px solid transparent; border-top: 3px solid #555; border-bottom: 0; pointer-events: none; }
.combo.face { width: 84px; margin-right: -1px; }
.combo.size { width: 33px; }
.number .combo { width: 99px; }

/* Formula bar */
.formula { flex: none; height: 20px; padding: 2px 0; display: flex; background: #d9dce2; border-bottom: 1px solid #a6abb4; }
.name { position: relative; width: 122px; display: flex; border: 1px solid #b5b9c1; background: #fff; }
.name input { width: 100%; text-align: center; padding-right: 14px; background: none; color: #222; }
.name::after { content: ""; position: absolute; right: 6px; top: 6px; border: 3px solid transparent; border-top: 3px solid #333; border-bottom: 0; }
.fx { width: 62px; display: flex; align-items: center; justify-content: space-between; padding-right: 5px; font: bold 11px/12px "Liberation Serif", serif; color: #222; border: solid #b5b9c1; border-width: 1px 0; }
.fx small { font-size: 8px; }
.knob { width: 12px; height: 12px; border: 1px solid #a9adb5; border-right: 0; border-radius: 6px 0 0 6px; }
.entry { flex: 1; border: 1px solid #b5b9c1; background: #fff; }
.expand { width: 12px; border: 1px solid #a9adb5; background: #e6e8ec; }

/* Worksheet */
.workbook { flex: 1; min-height: 0; display: flex; }
.sheet { flex: 1; min-width: 0; overflow: hidden; }
table { width: 100%; table-layout: fixed; border-collapse: separate; border-spacing: 0; font: 9px/12px Lato, "Open Sans", sans-serif; color: #111; }
.c-row { width: 20px; }
.c-a { width: 43px; }
.c-b { width: 23px; }
.c-c { width: 159px; }
.c-d { width: 77px; }
.c-e { width: 76px; }
.c-f { width: 68px; }
.c-g { width: 76px; }
.c-h { width: 75px; }
.c-i { width: 81px; }
.c-j { width: 68px; }
.c-k { width: 72px; }
.c-l { width: 82px; }
.c-m { width: 75px; }
tr { height: 13px; }
tbody tr:nth-child(even), thead tr { height: 14px; }
th { padding: 0; background: #e2e5ea; border: solid #b4b8bf; border-width: 0 1px 1px 0; font-weight: normal; color: #333; }
tbody th { border-bottom-color: #c6c9cf; }
.corner svg { margin: 1px 3px 0 auto; }
td { padding: 0 2px; border: solid #d5d9df; border-width: 0 1px 1px 0; white-space: nowrap; font-size: 8px; }
.heading td.blue { border-color: #4f81bd; }
.heading td.top { border-bottom-color: #111; }
.ledger td { border-color: #222; }
.ledger td.a { border-bottom-color: #d5d9df; }
.ledger td.n { border-color: #d5d9df; }
td.blue { background: #4f81bd; color: #fff; text-align: center; }
td.no { text-align: center; font-size: 9px; }
.m { display: flex; justify-content: space-between; padding: 0 3px; font-size: 9px; }

/* Scroll bars */
.vscroll { width: 15px; flex: none; padding: 1px 4px 2px 1px; display: flex; flex-direction: column; background: #dfe2e8; border-right: 2px solid #c7cbd2; }
.vscroll .split { height: 6px; background: #fff; border: 1px solid #777; }
.vscroll button { height: 13px; }
.vscroll .thumb { flex: 1; margin-bottom: 11px; }
.thumb { display: flex; align-items: center; justify-content: center; border: 1px solid #a3a8b1; border-radius: 2px; background: linear-gradient(#fafbfc, #e1e4e9); }
.vscroll .thumb { background: linear-gradient(90deg, #fafbfc, #dde1e8); }
.grip { width: 5px; height: 5px; border: solid #888d96; border-width: 0 1px; }
.vscroll .grip { border-width: 1px 0; }

/* Sheet tabs */
.sheets { flex: none; height: 13px; display: flex; background: #dce0e7; border-top: 1px solid #b4b8bf; color: #555; font-family: "Open Sans", "Noto Sans", sans-serif; }
.arrows { display: flex; gap: 4px; width: 49px; padding-left: 3px; border-right: 1px solid #a9adb5; }
.tab { padding: 0 8px; }
.tab + .slant + .tab { padding-left: 4px; }
.tab.active { background: #fff; font-weight: bold; color: #333; padding: 0 4px 0 8px; border-left: 1px solid #8f949c; }
.slant { width: 10px; height: 12px; }
.new { width: 16px; }
.hscroll { margin-left: auto; width: 418px; display: flex; gap: 1px; padding-right: 15px; }
.hscroll .split { width: 5px; border: 1px solid #777; background: #fff; }
.hscroll button { width: 11px; }
.track { flex: 1; display: flex; padding-right: 29px; }
.track .thumb { flex: 1; }

/* Status bar */
.status { flex: none; height: 16px; display: flex; align-items: center; padding: 0 3px 0 6px; background: linear-gradient(#d9dbdf, #b9bcc2); color: #333; }
.ready { flex: 1; }
.views { display: flex; gap: 0; margin-right: 8px; }
.views button { width: 14px; height: 14px; }
.views .on { background: #fbd668; border: 1px solid #c69b3c; }
.zoom { width: 26px; }
.status input { appearance: none; width: 75px; height: 12px; background: linear-gradient(transparent 5px, #8b8f97 5px, #8b8f97 6px, transparent 6px); }
.status input::-webkit-slider-thumb { appearance: none; width: 7px; height: 10px; border: 1px solid #777; border-radius: 1px 1px 4px 4px; background: #fff; }

/* Taskbar */
.taskbar { flex: none; height: 30px; display: flex; align-items: stretch; background: linear-gradient(90deg, #dde2e1, #dbe0e9 40%, #e1e3e3 60%, #dde4e8 75%, #e7e8e2); color: #222; }
.start { width: 37px; }
.search { width: 256px; display: flex; align-items: center; gap: 8px; padding-left: 8px; background: #fff; }
.search input { flex: 1; height: 20px; background: none; font-size: 11px; }
.search input::placeholder { color: #444; opacity: 1; }
.app { width: 37px; border-bottom: 2px solid transparent; }
.app.running { border-bottom-color: #1573cc; }
.app.current { background: #f4f6f8; width: 34px; margin-left: 1px; }
.tray { margin-left: auto; display: flex; align-items: center; gap: 6px; }
time { width: 58px; display: flex; flex-direction: column; align-items: center; justify-content: center; line-height: 13px; }
.notes { position: relative; width: 36px; }
.badge { position: absolute; right: 8px; bottom: 4px; width: 11px; height: 11px; border: 1px solid #777; border-radius: 50%; background: #dfe0dc; font-size: 8px; line-height: 9px; }
```
